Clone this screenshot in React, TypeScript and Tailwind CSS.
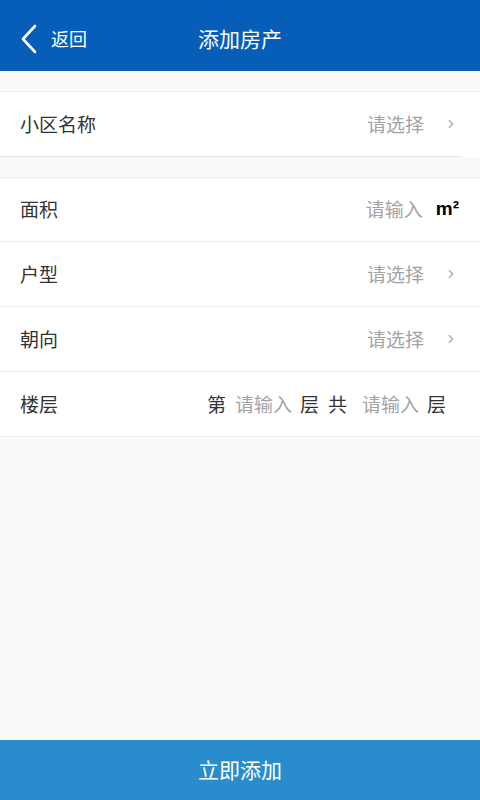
import { ChevronRight } from "lucide-react";

const font = { fontFamily: '"Noto Sans CJK SC", "Noto Sans", sans-serif' };

function SelectRow({ label, last }: { label: string; last?: boolean }) {
  return (
    <div
      className={`flex h-[65px] items-center justify-between pl-5 pr-[22px] ${
        last ? "" : "border-b border-[#ececec]"
      }`}
    >
      <span className="text-[19px] text-[#333]">{label}</span>
      <div className="flex items-center gap-[20px]">
        <span className="text-[19px] text-[#a3a3a3]">请选择</span>
        <ChevronRight className="h-[14px] w-[14px] text-[#a8a8a8]" strokeWidth={2} />
      </div>
    </div>
  );
}

export default function App() {
  return (
    <div className="flex h-[800px] w-[480px] flex-col bg-[#f9f9f9]" style={font}>
      {/* header */}
      <div className="relative flex h-[71px] shrink-0 items-center bg-[#065eb8] pt-[6px] text-white">
        <div className="flex items-center pl-[20px]">
          <svg width="18" height="30" viewBox="0 0 18 30" fill="none">
            <path d="M15 2 L3 15 L15 28" stroke="white" strokeWidth="2.6" strokeLinecap="round" strokeLinejoin="round" />
          </svg>
          <span className="ml-[13px] text-[18px]">返回</span>
        </div>
        <span className="absolute left-1/2 -translate-x-1/2 text-[21px]">添加房产</span>
      </div>

      {/* card 1 */}
      <div className="mt-[20px] border-t border-[#ededed] bg-white">
        <div className="flex h-[64px] items-center justify-between pl-5 pr-[22px]">
          <span className="text-[19px] text-[#333]">小区名称</span>
          <div className="flex items-center gap-[20px]">
            <span className="text-[19px] text-[#a3a3a3]">请选择</span>
            <ChevronRight className="h-[14px] w-[14px] text-[#a8a8a8]" strokeWidth={2} />
          </div>
        </div>
        <div className="mr-[20px] h-px bg-[#e6e6e6]" />
      </div>

      {/* card 2 */}
      <div className="mt-[20px] border-y border-[#ededed] bg-white">
        <div className="flex h-[64px] items-center justify-between border-b border-[#ececec] pl-5 pr-[21px]">
          <span className="text-[19px] text-[#333]">面积</span>
          <div className="flex items-center gap-[13px]">
            <span className="text-[19px] text-[#a3a3a3]">请输入</span>
            <span className="text-[19px] font-semibold text-black" style={{ fontFamily: '"Liberation Sans", sans-serif' }}>
              m²
            </span>
          </div>
        </div>
        <SelectRow label="户型" />
        <SelectRow label="朝向" />
        <div className="flex h-[64px] items-center justify-between pl-5 pr-[34px]">
          <span className="text-[19px] text-[#333]">楼层</span>
          <div className="flex items-center text-[19px]">
            <span className="text-[#333]">第</span>
            <span className="ml-[9px] text-[#a3a3a3]">请输入</span>
            <span className="ml-[8px] text-[#333]">层</span>
            <span className="ml-[9px] text-[#333]">共</span>
            <span className="ml-[15px] text-[#a3a3a3]">请输入</span>
            <span className="ml-[8px] text-[#333]">层</span>
          </div>
        </div>
      </div>

      <div className="flex-1" />

      {/* submit */}
      <button className="flex h-[60px] shrink-0 items-center justify-center bg-[#288ccd] text-[21px] text-white">
        立即添加
      </button>
    </div>
  );
}
